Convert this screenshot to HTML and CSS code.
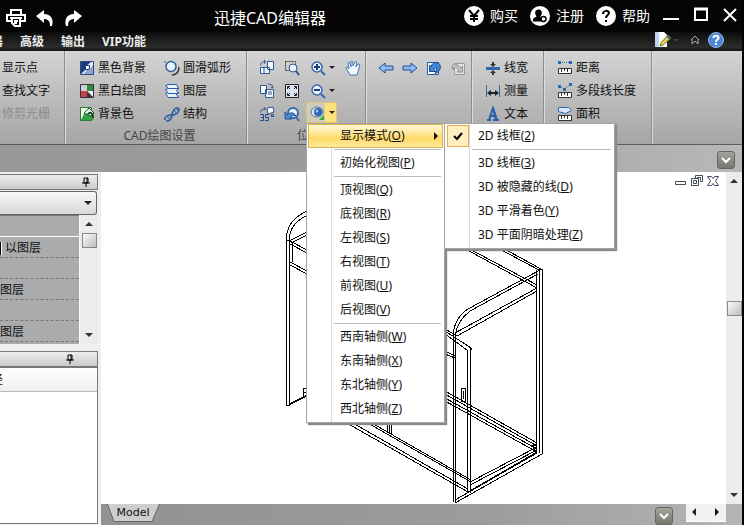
FILE: index.html
```html
<!DOCTYPE html>
<html lang="zh-CN">
<head>
<meta charset="utf-8">
<title>迅捷CAD编辑器</title>
<link rel="stylesheet" href="styles.css">
</head>
<body>
<div class="app">
  <header class="titlebar">
    <div class="quick">
      <button class="bare" aria-label="打印"><svg width="20" height="18" viewBox="0 0 20 18" fill="none" stroke="#fff" stroke-width="2"><path d="M5 5V1h10v4M5 12H1V6h18v6h-4M4 9h12M6 9v5l3 3h5V9M8 12h4M8 14h3"/></svg></button>
      <button class="bare" aria-label="撤销"><svg width="18" height="18" viewBox="0 0 18 18" fill="#fff"><path d="M0 7 8 1v4c7 0 10 5 8 12l-2 0c0-5-2-7-6-7v4z"/></svg></button>
      <button class="bare" aria-label="重做"><svg width="18" height="18" viewBox="0 0 18 18" fill="#fff"><path d="M18 7 10 1v4C3 5 0 10 2 17l2 0c0-5 2-7 6-7v4z"/></svg></button>
    </div>
    <h1>迅捷CAD编辑器</h1>
    <div class="account">
      <button class="bare link"><svg width="20" height="20" viewBox="0 0 20 20"><circle cx="10" cy="10" r="10" fill="#fff"/><path d="m5 4 5 6 5-6M10 10v6M6 10h8M6 13h8" fill="none" stroke="#000" stroke-width="2"/></svg>购买</button>
      <button class="bare link"><svg width="20" height="20" viewBox="0 0 20 20"><circle cx="10" cy="10" r="10" fill="#fff"/><path d="M8.500 3.500c4 0 4 4 2 7v1l1 1v3H3v-2c0-2 3-2 3.500-3-2-3-2-7 2-7z"/><circle cx="13.500" cy="13" r="2.500" fill="#fff" stroke="#000" stroke-width="1.500"/></svg>注册</button>
      <button class="bare link"><svg width="20" height="20" viewBox="0 0 20 20"><circle cx="10" cy="10" r="10" fill="#fff"/><path d="M7 8c0-4 6-4 6-1 0 2-3 2-3 5M10 14v2" fill="none" stroke="#000" stroke-width="2"/></svg>帮助</button>
    </div>
    <div class="window-buttons">
      <button class="bare" aria-label="最小化"><svg width="16" height="16" viewBox="0 0 16 16"><path d="M0 12h16" stroke="#fff" stroke-width="2"/></svg></button>
      <button class="bare" aria-label="最大化"><svg width="14" height="16" viewBox="0 0 14 16"><path d="M1 2h12v11H1z" fill="none" stroke="#fff" stroke-width="2"/><path d="M0 2h14" stroke="#fff" stroke-width="3"/></svg></button>
      <button class="bare" aria-label="关闭"><svg width="14" height="16" viewBox="0 0 14 16"><path d="m1 2 12 12M13 2 1 14" stroke="#fff" stroke-width="2"/></svg></button>
    </div>
  </header>

  <nav class="tabs">
    <button class="bare tab tab-first">器</button>
    <button class="bare tab">高级</button>
    <button class="bare tab">输出</button>
    <button class="bare tab">VIP功能</button>
    <div class="tab-tools">
      <button class="bare" aria-label="样式"><svg width="24" height="16" viewBox="0 0 24 16"><path d="M1 0h9l3 3v12H1z" fill="#fff"/><path d="M1 0h4v15H1z" fill="#bcd4f4"/><path d="m7 11 7-8 3 3-8 7-3 1z" fill="#e8d85a" stroke="#776a1a"/><path d="m13 4 3 3" stroke="#3466a4" stroke-width="2"/><path d="M19 7h5l-2.500 3z" fill="#444"/></svg></button>
      <button class="bare" aria-label="折叠功能区"><svg width="10" height="10" viewBox="0 0 10 10" fill="none" stroke="#aaa"><path d="M1 5 5 1l4 4M2 4v5l3-3 3 3V4"/></svg></button>
      <button class="bare" aria-label="帮助主题"><svg width="16" height="16" viewBox="0 0 16 16"><circle cx="8" cy="8" r="7.500" fill="#4f86d4" stroke="#8db8ee"/><path d="M5.500 6c0-3 5-3 5 0 0 1.500-2.500 1.500-2.500 4M8 11v2" fill="none" stroke="#fff" stroke-width="2"/></svg></button>
    </div>
  </nav>

  <section class="ribbon">
    <div class="group g-find">
      <div class="cols"><div class="col">
        <button class="cmd">显示点</button><button class="cmd">查找文字</button><button class="cmd" disabled>修剪光栅</button>
      </div></div>
    </div>
    <div class="group g-draw">
      <div class="cols">
        <div class="col">
          <button class="cmd"><svg class="ic" viewBox="0 0 16 16"><path d="M1.500 1.500h13v13h-13z" fill="#dfe9f8" stroke="#2c4a83"/><path d="M2 2h10L7 6v3l-5 5z" fill="#1e3d7c"/><path d="M6.500 5.500h4v4h-4z" fill="#fff" stroke="#1e3d7c"/><path d="m10 10 4-5v9H5l3-4z" fill="#8aa6d0"/></svg>黑色背景</button>
          <button class="cmd"><svg class="ic" viewBox="0 0 16 16"><path d="M1.500 1.500h13v13h-13z" fill="#f6f6f6" stroke="#333"/><path d="M8 2h6v6H8z" fill="#2e8a45"/><path d="M2 8h6v6H2z" fill="#c8404a"/><path d="M2 2h6v6H2z" fill="#cbd3e2"/><path d="m8 8 6 6H8z" fill="#333"/></svg>黑白绘图</button>
          <button class="cmd"><svg class="ic" viewBox="0 0 16 16"><path d="M1.500 1.500h11v13h-11z" fill="#eef6ee" stroke="#2b7a35"/><path d="m2 14 4-8 6 3 3 5z" fill="#35a045"/><path d="m5 7 5-5 5 5-3 3z" fill="#e8f6e8" stroke="#1e5e28"/><path d="M9 8c3-3 5 0 5 4" stroke="#173f1c" fill="none" stroke-width="2"/></svg>背景色</button>
        </div>
        <div class="col">
          <button class="cmd"><svg class="ic" viewBox="0 0 16 16"><circle cx="7" cy="6.500" r="5" fill="#eaf2fd" stroke="#315f9e" stroke-width="1.500"/><path d="m0 1 2 2" stroke="#315f9e"/><path d="M15 7c0 5-3 8-7 8" fill="none" stroke="#333" stroke-width="1.500"/></svg>圆滑弧形</button>
          <button class="cmd"><svg class="ic" viewBox="0 0 16 16" fill="#e8f1fc" stroke="#2a5aa4"><path d="m1.500 10.500 3-1h10l-2 2 2 3h-10z"/><path d="m1.500 6.500 3-1h10l-2 2 2 3h-10z"/><path d="m1.500 2.500 3-1h8l2 4h-10z"/></svg>图层</button>
          <button class="cmd"><svg class="ic" viewBox="0 0 16 16" fill="none" stroke="#2a5aa4" stroke-width="1.500"><path d="M1 14c-1-6 6-4 7-6s1-7 7-6M2 15c6 1 5-5 7-6s6 0 6-7"/><path d="m3 10 3 4M5 9l3 3M10 4l3 4M12 2l2 3" stroke-width="1"/></svg>结构</button>
        </div>
      </div>
      <div class="caption">CAD绘图设置</div>
    </div>
    <div class="group g-view">
      <div class="cols">
        <div class="col">
          <button class="cmd" aria-label="旋转左"><svg class="ic" viewBox="0 0 16 16" fill="#f4f8ff" stroke="#31578f"><path d="M8.500 1.500h6v8h-6zM1.500 7.500h9v6h-9z"/><path d="M1.500 5.500c0-3 2-4 5-4L5 0M6.500 1.500 5 4M5 8v6" fill="none"/></svg></button>
          <button class="cmd" aria-label="旋转右"><svg class="ic" viewBox="0 0 16 16" fill="#f4f8ff" stroke="#31578f"><path d="M1.500 2.500h6v8h-6zM6.500 6.500h8v8h-8z"/><path d="M9 1c3 0 5 1 5 4l-2-1M9 9h4M9 11h4" fill="none"/></svg></button>
          <button class="cmd" aria-label="旋转35度"><svg class="ic" viewBox="0 0 16 16"><path d="m8 2 6-1 1 5-6 2z" fill="#f4f8ff" stroke="#31578f"/><path d="M1.500 6.500c0-3 2-3 5-3L5 1M1 8.500h3.500v3H2h2.500v3H1M10 8.500H6.500v3h3v3H6M12.500 8.500h2v2h-2z" fill="none" stroke="#234a8c"/></svg></button>
        </div>
        <div class="col">
          <button class="cmd" aria-label="窗口缩放"><svg class="ic" viewBox="0 0 16 16"><path d="M1.500 1.500h10v9h-10z" fill="none" stroke="#333" stroke-dasharray="2 1"/><circle cx="9" cy="8" r="4" fill="#eaf2fd" stroke="#31578f"/><path d="m12 11 3 4" stroke="#31578f" stroke-width="2"/></svg></button>
          <button class="cmd" aria-label="适合窗口"><svg class="ic" viewBox="0 0 16 16"><path d="M1.500 1.500h13v13h-13z" fill="#d8e3f3" stroke="#222"/><path d="M3.500 6V3.500H6M10 3.500h2.500V6M12.500 10v2.500H10M6 12.500H3.500V10M4 4l2 2M12 4l-2 2M12 12l-2-2M4 12l2-2" fill="none" stroke="#222"/></svg></button>
          <button class="cmd" aria-label="上一视图"><svg class="ic" viewBox="0 0 16 16"><circle cx="9" cy="7" r="5" fill="#eaf2fd" stroke="#3569ae" stroke-width="2"/><path d="m12 11 3 4" stroke="#3569ae" stroke-width="2"/><path d="M1 6v7h7l-2-2c2-2 4-2 6-1-2-4-6-4-9-1z" fill="#4e8ddd" stroke="#24528f"/></svg></button>
        </div>
        <div class="col col-drop">
          <button class="cmd" aria-label="放大"><svg class="ic" viewBox="0 0 16 16"><circle cx="7" cy="7" r="5" fill="#eaf2fd" stroke="#3569ae" stroke-width="1.500"/><path d="m11 11 4 4" stroke="#3569ae" stroke-width="2"/><path d="M4 7h6M7 4v6" stroke="#1a3c7c" stroke-width="2"/></svg><i class="arrow"></i></button>
          <button class="cmd" aria-label="缩小"><svg class="ic" viewBox="0 0 16 16"><circle cx="7" cy="7" r="5" fill="#eaf2fd" stroke="#3569ae" stroke-width="1.500"/><path d="m11 11 4 4" stroke="#3569ae" stroke-width="2"/><path d="M4 7h6" stroke="#1a3c7c" stroke-width="2"/></svg><i class="arrow"></i></button>
          <button class="cmd open" aria-label="视图"><svg class="ic" viewBox="0 0 16 16"><ellipse cx="7" cy="7" rx="6" ry="5" fill="#d8e5f2" stroke="#547089"/><circle cx="8" cy="7" r="4" fill="#2f64ae"/><circle cx="7" cy="6" r="1.500" fill="#9cc6f4"/><path d="M9 15h5v-5z" fill="#36a63c"/></svg><i class="arrow"></i></button>
        </div>
        <div class="col">
          <button class="cmd" aria-label="平移"><svg class="ic" viewBox="0 0 16 16"><path d="M5 15 1 8c0-2 2-1 3 1L3 3c1-2 2-1 3 4V2c1-2 2-1 2 4l2-4c2-1 2 0 1 5l2-3c2 0 2 1 1 4l-2 7z" fill="#f4f8ff" stroke="#4874b4"/></svg></button>
        </div>
      </div>
      <div class="caption">位置</div>
    </div>
    <div class="group g-nav">
      <div class="cols">
        <button class="cmd" aria-label="后退"><svg class="ic" viewBox="0 0 16 16"><path d="m1 8 6-5v3h8v4H7v3z" fill="#8fbdf2" stroke="#1f4f98"/></svg></button>
        <button class="cmd" aria-label="前进"><svg class="ic" viewBox="0 0 16 16"><path d="M15 8 9 3v3H1v4h8v3z" fill="#8fbdf2" stroke="#1f4f98"/></svg></button>
        <button class="cmd" aria-label="撤销更改"><svg class="ic" viewBox="0 0 16 16"><path d="M1.500 2.500h11v12h-11z" fill="#fff" stroke="#2a5aa0"/><path d="M3.500 5v6.500H10L8 9.500c3-3 4 0 1 4 7-2 7-11 1-11-2 0-4 1-5 4z" fill="#3f86d8" stroke="#1d4988"/></svg></button>
        <button class="cmd" aria-label="恢复更改" disabled><svg class="ic" viewBox="0 0 16 16"><path d="M4.500 3.500h10v11h-10z" fill="#e0e0e0" stroke="#999"/><path d="M12.500 6v6H7l2-2C6 6 3 7 3 10 0 5 5 1 10.500 8z" fill="#c4c4c4" stroke="#929292"/></svg></button>
      </div>
    </div>
    <div class="group g-measure">
      <div class="cols"><div class="col">
        <button class="cmd"><svg class="ic" viewBox="0 0 16 16"><path d="M1 8.500h14" stroke="#2d67b4" stroke-width="3"/><path d="M8 2v4M8 11v4" stroke="#333" stroke-width="2"/><path d="M5 4h6L8 7zM5 13h6l-3-3z" fill="#333"/></svg>线宽</button>
        <button class="cmd"><svg class="ic" viewBox="0 0 16 16"><path d="M1.500 2v12M14.500 2v12" stroke="#2d67b4"/><path d="M4 10h8" stroke="#222" stroke-width="2"/><path d="m2 10 4-3v6zM14 10l-4-3v6z" fill="#222"/></svg>测量</button>
        <button class="cmd"><svg class="ic" viewBox="0 0 16 16"><path d="m4 14 4-12 3 12M5 10h5M2 14h4M8 14h6" fill="none" stroke="#2d5fae" stroke-width="2"/><path d="m8 2 3 12h2L9 2z" fill="#2d5fae"/></svg>文本</button>
      </div></div>
    </div>
    <div class="group g-length">
      <div class="cols"><div class="col">
        <button class="cmd"><svg class="ic" viewBox="0 0 16 16"><path d="M1 1h3v3H1zM12 1h3v3h-3z" fill="#2d67b4"/><path d="M5 2.500h7" stroke="#2d67b4" stroke-dasharray="1 1"/><path d="M1.500 8.500h13v5h-13zM4.500 9v3M7.500 9v2M10.500 9v3" fill="#fff" stroke="#333"/></svg>距离</button>
        <button class="cmd"><svg class="ic" viewBox="0 0 16 16"><path d="M1 2h3v3H1zM6 5h3v3H6zM12 0h3v3h-3z" fill="#2d67b4"/><path d="m4 4 3 2 6-4" stroke="#2d67b4" fill="none" stroke-dasharray="1 1"/><path d="M1.500 9.500h13v5h-13zM4.500 10v3M7.500 10v2M10.500 10v3" fill="#fff" stroke="#333"/></svg>多段线长度</button>
        <button class="cmd"><svg class="ic" viewBox="0 0 16 16"><path d="M1.500 1.500h10l3 3-6 3-7-2z" fill="#dce9fb" stroke="#2d67b4"/><path d="M1.500 9.500h13v5h-13zM4.500 10v3M7.500 10v2M10.500 10v3" fill="#fff" stroke="#333"/></svg>面积</button>
      </div></div>
    </div>
  </section>

  <div class="strip"><button class="chip" aria-label="更多"><svg width="10" height="8" viewBox="0 0 10 8"><path d="m1 2 4 4 4-4" fill="none" stroke="#fff" stroke-width="2"/></svg></button></div>

  <main class="work">
    <aside class="side">
      <div class="pane-head"><svg width="8" height="10" viewBox="0 0 8 10"><path d="M2 1h4v5H2zM0 6h8M4 6v4M5 1v5" fill="none" stroke="#000"/></svg></div>
      <button class="combo" aria-label="选择对象"><i class="arrow big"></i></button>
      <div class="props">
        <div class="prop-list">
          <div class="prop lead"></div>
          <div class="prop"><span class="swatch"></span>以图层</div>
          <div class="prop"></div>
          <div class="prop">图层</div>
          <div class="prop"></div>
          <div class="prop">图层</div>
        </div>
        <div class="vbar"><i class="arrow up"></i><span class="thumb"></span><i class="arrow down"></i></div>
      </div>
      <div class="pane-head second"><svg width="8" height="10" viewBox="0 0 8 10"><path d="M2 1h4v5H2zM0 6h8M4 6v4M5 1v5" fill="none" stroke="#000"/></svg></div>
      <div class="paths"><div class="path-head"><span>径</span></div></div>
    </aside>

    <section class="view">
      <div class="canvas">
        <svg class="drawing" width="625" height="332" viewBox="101 172 625 332" fill="none" stroke="#000" shape-rendering="crispEdges">
          <path d="M286.500 406V238C287 224 296 215 310 210M289.500 406V238C290 227 298 219 310 214M286 240h5l16-8M291 243l16-8M290 241l17 9M290 244l17 9M292.500 243v19M290 262l17 9M290 265l17 9M287 406l20-10M289 404l18-9M303.500 398v-10h4M303 392h4"/>
          <path d="M460 246l77 42M464 246l73 39M494 246l45 24M499 246l42 23"/>
          <path d="M536.500 270v184M539.500 270v183M542.500 269v185M539 269l3 1"/>
          <path d="M540 270 468 309C459 315 454 322 453.500 334M538 274 470 311C461 318 456 325 455.500 336M537 288 455 333M537 291 457 336"/>
          <path d="M453.500 332v170M455.500 332v171M445 331l26 17v2M445 334l22 16M445 329l12 7M467.500 350v142M470.500 348v145M445 351l10 5M445 354l10 4"/>
          <path d="M445 391l92 52M445 394l92 52M445 398l92 51M445 401l92 51M532 446l5-2M532 449l5 2"/>
          <path d="M345 422l123 70M351 422l117 67M366 422l105 60M370 422l101 58M387.500 420v12M389.500 420v13M391.500 420v14"/>
          <path d="M470 482l67-35M470 485l67-35M468 492l69-40M455 503l87-49M455 500l82-47"/>
          <path d="M461.500 388.500h4v13h-4zM463.500 391v8"/>
        </svg>
        <div class="mdi">
          <button class="bare" aria-label="最小化图纸"><svg width="12" height="12" viewBox="0 0 12 12"><path d="M.5 6.500h10v3H.5z" fill="#fff" stroke="#444b55"/></svg></button>
          <button class="bare" aria-label="还原图纸"><svg width="12" height="12" viewBox="0 0 12 12" fill="none" stroke="#444b55"><path d="M4.500 3V.5h7v6H9M.5 3.500h7v7h-7zM2.500 5.500h3v3h-3zM6 2.500h3.500v3"/></svg></button>
          <button class="bare" aria-label="关闭图纸"><svg width="12" height="12" viewBox="0 0 12 12"><path d="M.5 1.500h4l1.500 2 1.500-2h4L8.500 6l3 4.500h-4L6 8.500l-1.500 2h-4l3-4.500z" fill="#fff" stroke="#444b6a"/></svg></button>
        </div>
      </div>
      <div class="vbar main-bar"><i class="arrow up"></i><span class="thumb"></span><i class="arrow down"></i></div>
      <div class="sheetbar">
        <button class="sheet"><svg class="sheet-shape" width="54" height="19" viewBox="0 0 54 19"><path d="M0-1 7 17.500h38L53-1z" fill="#cecece" stroke="#666"/></svg><span>Model</span></button>
        <button class="chip" aria-label="图纸列表"><svg width="10" height="8" viewBox="0 0 10 8"><path d="m1 2 4 4 4-4" fill="none" stroke="#fff" stroke-width="2"/></svg></button>
        <div class="hbar"><i class="arrow left"></i><i class="arrow right"></i></div>
      </div>
    </section>
  </main>

  <div class="menu view-menu" role="menu">
    <button class="item hot" role="menuitem">显示模式(<u>O</u>)<i class="arrow right"></i></button>
    <hr>
    <button class="item" role="menuitem">初始化视图(<u>P</u>)</button>
    <hr>
    <button class="item" role="menuitem">顶视图(<u>Q</u>)</button>
    <button class="item" role="menuitem">底视图(<u>R</u>)</button>
    <button class="item" role="menuitem">左视图(<u>S</u>)</button>
    <button class="item" role="menuitem">右视图(<u>T</u>)</button>
    <button class="item" role="menuitem">前视图(<u>U</u>)</button>
    <button class="item" role="menuitem">后视图(<u>V</u>)</button>
    <hr>
    <button class="item" role="menuitem">西南轴侧(<u>W</u>)</button>
    <button class="item" role="menuitem">东南轴侧(<u>X</u>)</button>
    <button class="item" role="menuitem">东北轴侧(<u>Y</u>)</button>
    <button class="item" role="menuitem">西北轴侧(<u>Z</u>)</button>
  </div>

  <div class="menu mode-menu" role="menu">
    <button class="item" role="menuitemradio" aria-checked="true"><span class="check"><svg width="10" height="9" viewBox="0 0 10 9"><path d="m1 4 3 3 5-6" fill="none" stroke="#000" stroke-width="2"/></svg></span>2D 线框(<u>2</u>)</button>
    <hr>
    <button class="item" role="menuitemradio">3D 线框(<u>3</u>)</button>
    <button class="item" role="menuitemradio">3D 被隐藏的线(<u>D</u>)</button>
    <button class="item" role="menuitemradio">3D 平滑着色(<u>Y</u>)</button>
    <button class="item" role="menuitemradio">3D 平面阴暗处理(<u>Z</u>)</button>
  </div>
</div>
</body>
</html>
```
FILE: styles.css
```css
* { box-sizing: border-box; }

body {
  margin: 0;
  background: #000;
  font: 12px/16px "Noto Sans", "Noto Sans CJK SC", sans-serif;
  color: #111;
}

button { font: inherit; color: inherit; margin: 0; cursor: default; }
svg { display: block; flex: none; }

.bare { display: flex; align-items: center; padding: 0; border: 0; background: none; }

.app {
  position: relative;
  display: flex;
  flex-direction: column;
  height: 100vh;
  padding-right: 2px;
  overflow: hidden;
}

/* Title bar */
.titlebar {
  display: flex;
  align-items: center;
  height: 32px;
  padding: 0 5px 2px 6px;
  color: #fff;
  background: #050505;
}
.quick { display: flex; gap: 10px; align-items: center; padding-top: 5px; }
.titlebar h1 { margin: 6px 0 0 132px; font-size: 16px; line-height: 24px; font-weight: 400; white-space: nowrap; }
.account { display: flex; gap: 12px; margin-left: auto; padding-top: 2px; font-size: 14px; line-height: 20px; white-space: nowrap; }
.link { gap: 6px; }
.window-buttons { display: flex; gap: 15px; margin-left: 13px; }

/* Ribbon tabs */
.tabs {
  display: flex;
  align-items: center;
  gap: 17px;
  height: 19px;
  color: #eee;
  background: linear-gradient(#0c0c0c, #2c2c2c 80%, #111);
}
.tab { font-weight: 700; white-space: nowrap; }
.tab-first { width: 3px; justify-content: flex-end; overflow: hidden; }
.tab-tools { display: flex; align-items: center; margin-left: auto; padding: 0 18px 3px 0; gap: 12px; }
.tab-tools .bare:last-child { margin-left: -4px; }

/* Ribbon */
.ribbon {
  display: flex;
  height: 94px;
  border-bottom: 1px solid #5c5c5c;
  background: linear-gradient(#d4d4d4, #bebebe 45%, #a6a6a6);
}
.group {
  display: flex;
  flex-direction: column;
  flex: none;
  padding-top: 5px;
  border-right: 1px solid #8d8d8d;
  box-shadow: 1px 0 #dcdcdc;
}
.cols { display: flex; height: 69px; align-items: flex-start; }
.col { display: flex; flex-direction: column; }
.cmd {
  display: flex;
  align-items: center;
  gap: 3px;
  height: 23px;
  padding: 0;
  border: 0;
  background: none;
  white-space: nowrap;
}
.cmd:disabled { color: #8c8c8c; }
.ic { width: 16px; height: 16px; }
.caption { height: 19px; padding-top: 3px; text-align: center; color: #444; }
.g-find { width: 65px; padding-left: 2px; }
.g-draw { width: 182px; }
.g-draw .cols { padding-left: 14px; gap: 18px; }
.g-draw .caption { padding-left: 8px; }
.g-view { width: 119px; }
.g-view .cols { padding-left: 12px; gap: 9px; }
.g-view .caption { padding-left: 6px; }
.col-drop { width: 26px; margin-left: 1px; }
.g-nav { width: 106px; }
.g-nav .cols { padding-left: 12px; gap: 8px; }
.g-measure { width: 72px; padding-left: 13px; }
.g-length { width: 108px; padding-left: 13px; }
.cmd.open {
  height: 21px;
  width: 31px;
  margin-left: -4px;
  padding-left: 3px;
  border: 1px solid #e2c372;
  background: linear-gradient(90deg, #d0ccbd 18px, #ffe17c 18px);
}

.arrow {
  flex: none;
  width: 0;
  height: 0;
  border: 3px solid transparent;
  border-top-color: #222;
  border-bottom: 0;
}
.arrow.big { border-width: 4px 4px 0; }
.arrow.up { border: 4px solid transparent; border-top: 0; border-bottom-color: #333; }
.arrow.down { border-width: 4px 4px 0; border-top-color: #333; }
.arrow.left { border: 4px solid transparent; border-left: 0; border-right-color: #222; }
.arrow.right { border: 4px solid transparent; border-right: 0; border-left-color: #111; }

/* Strip under the ribbon */
.strip {
  display: flex;
  justify-content: flex-end;
  align-items: center;
  height: 27px;
  padding: 5px 7px 3px 0;
  background: linear-gradient(90deg, #989898, #9c9c9c 50%, #b8b8b8);
}
.chip {
  display: flex;
  align-items: center;
  justify-content: center;
  width: 18px;
  height: 18px;
  padding: 0;
  border: 1px solid #66665e;
  border-radius: 3px;
  background: linear-gradient(#a3a39b, #777770);
}

/* Work area */
.work { display: flex; flex: 1; min-height: 0; }
.side {
  display: flex;
  flex-direction: column;
  width: 101px;
  padding: 2px 3px 1px 0;
  background: #efefef;
}
.pane-head {
  display: flex;
  justify-content: flex-end;
  align-items: center;
  height: 16px;
  flex: none;
  padding-right: 7px;
  border: 1px solid #777;
  border-left: 0;
  background: linear-gradient(#eee, #cacaca);
}
.pane-head.second { margin-top: 7px; padding-right: 23px; }
.combo {
  display: flex;
  justify-content: flex-end;
  align-items: center;
  height: 24px;
  flex: none;
  margin: 1px 1px 0 0;
  padding: 0 4px 0 0;
  border: 1px solid #666;
  border-left: 0;
  border-radius: 0 3px 3px 0;
  background: linear-gradient(#f8f8f8, #d8d8d8);
}
.props { display: flex; height: 129px; flex: none; background: #fafafa; }
.prop-list { flex: 1; margin-right: 1px; background: #a9abad; overflow: hidden; border-top: 1px solid #777; }
.prop {
  display: flex;
  align-items: center;
  height: 21px;
  padding-top: 2px;
  border-bottom: 1px dashed #777;
  white-space: nowrap;
}
.prop.lead { border-bottom: 1px solid #fff; }
.swatch { width: 2px; height: 13px; margin-right: 3px; background: #000; border-right: 1px solid #fff; }
.vbar {
  display: flex;
  flex-direction: column;
  align-items: center;
  width: 18px;
  padding: 7px 0;
  background: #ececec;
}
.thumb {
  width: 15px;
  height: 15px;
  margin-top: 7px;
  border: 1px solid #888;
  background: linear-gradient(135deg, #fafafa, #bdbdbd);
}
.vbar .down { margin-top: auto; }
.paths { flex: 1; border: 1px solid #777; border-left: 0; background: #fff; }
.path-head { display: flex; align-items: center; height: 24px; border-bottom: 1px solid #bbb; background: linear-gradient(#fff, #f0f0f0); }
.path-head span { display: flex; justify-content: flex-end; width: 3px; overflow: hidden; }

.view { display: grid; grid-template: 1fr 21px / 1fr 16px; flex: 1; min-width: 0; }
.canvas { position: relative; background: #fff; overflow: hidden; }
.drawing { position: absolute; left: 0; top: 0; }
.mdi { position: absolute; right: 7px; top: 3px; display: flex; gap: 4px; }
.main-bar { width: 16px; }
.main-bar .thumb { margin-top: 118px; }
.sheetbar {
  grid-column: 1 / 3;
  display: flex;
  align-items: flex-start;
  background: linear-gradient(90deg, #929292, #9c9c9c 60%, #b4b4b4);
}
.sheet {
  position: relative;
  width: 54px;
  height: 19px;
  margin-left: 6px;
  padding: 0 2px 2px 0;
  border: 0;
  background: none;
  font: 11px/16px "DejaVu Sans", sans-serif;
}
.sheet-shape { position: absolute; left: 0; top: 0; }
.sheet span { position: relative; }
.sheetbar .chip { margin: 3px 13px 0 auto; }
.hbar {
  display: flex;
  justify-content: space-between;
  align-items: center;
  width: 40px;
  height: 18px;
  padding: 0 7px 1px 6px;
  margin-right: 16px;
  background: #f1f1f1;
  border-bottom: 1px solid #fff;
}

/* Drop-down menus */
.menu {
  position: absolute;
  top: 123px;
  display: flex;
  flex-direction: column;
  padding: 0 1px 1px;
  border: 1px solid #a5a5a5;
  background: linear-gradient(90deg, #fff 24px, #dcdcdc 24px, #dcdcdc 25px, #fff 25px);
  box-shadow: 2px 2px 1px #8a8a8a;
}
.view-menu { left: 306px; width: 139px; }
.mode-menu { left: 444px; width: 171px; }
.item {
  position: relative;
  display: flex;
  align-items: center;
  height: 24px;
  padding: 0 0 0 31px;
  border: 1px solid transparent;
  background: none;
  white-space: pre;
}
.item u { text-underline-offset: 1px; }
.item.hot {
  border-color: #dcb251;
  background: linear-gradient(#fff7d4, #ffe694 40%, #ffd966 60%, #ffeaa0);
}
.item .arrow { margin-left: auto; margin-right: 4px; }
.menu hr { width: calc(100% - 28px); height: 1px; margin: 1px 2px 1px auto; border: 0; background: #bbb; }
.check {
  position: absolute;
  left: 0;
  top: 0;
  display: flex;
  align-items: center;
  justify-content: center;
  width: 22px;
  height: 22px;
  border: 1px solid #e0ad5c;
  background: #ffefc0;
}
```
